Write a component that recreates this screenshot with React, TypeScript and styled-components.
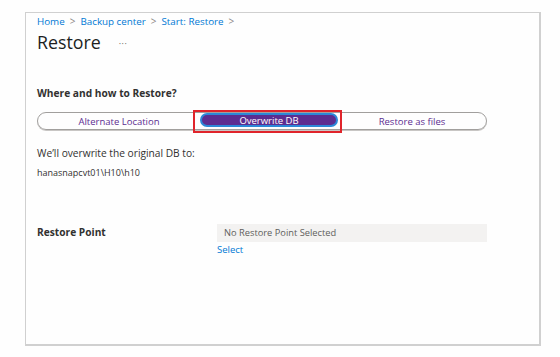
import React from "react";
import styled, { createGlobalStyle } from "styled-components";

const Global = createGlobalStyle`
  html, body { margin: 0; padding: 0; background: #fefefe; }
  body { font-family: "Open Sans", "Noto Sans", sans-serif; color: #323130; }
`;

const Page = styled.div`
  padding: 12px 20px 12px 25px;
`;

const Frame = styled.div`
  box-sizing: border-box;
  width: 516px;
  height: 334px;
  border: 1px solid #d0d0d0;
  border-right: 2px solid #d0d0d0;
  border-bottom: 2px solid #d0d0d0;
  background: #fefefe;
  padding: 0 11px;
  display: flex;
  flex-direction: column;
`;

const Crumbs = styled.div`
  display: flex;
  align-items: center;
  gap: 5px;
  height: 16px;
  font-size: 9.8px;
  color: #0078d4;
`;

const Chevron = styled.span`
  color: #8a8886;
  font-size: 10px;
`;

const TitleRow = styled.div`
  display: flex;
  align-items: center;
  gap: 18px;
  margin-top: 1px;
  height: 24px;
`;

const Title = styled.h1`
  margin: 0;
  font-size: 17.8px;
  font-weight: 400;
  color: #201f1e;
`;

const Dots = styled.span`
  font-size: 9px;
  color: #605e5c;
  letter-spacing: 0.5px;
  transform: translateY(1px);
`;

const Heading = styled.div`
  margin-top: 31px;
  height: 16px;
  line-height: 16px;
  font-size: 10.2px;
  font-weight: 700;
  color: #323130;
`;

const Toggle = styled.div`
  box-sizing: border-box;
  margin-top: 11px;
  width: 450px;
  height: 18px;
  border: 1px solid #a19f9d;
  border-radius: 9px;
  box-shadow: 0 1px 0 #c8c6c4;
  display: grid;
  grid-template-columns: 162px 138px 1fr;
  align-items: start;
`;

const Segment = styled.div<{ $selected?: boolean }>`
  position: relative;
  box-sizing: border-box;
  height: ${(p) => (p.$selected ? "14px" : "16px")};
  display: flex;
  align-items: center;
  justify-content: center;
  font-size: 9.5px;
  border-radius: 8px;
  color: ${(p) => (p.$selected ? "#ffffff" : "#5c2d91")};
  background: ${(p) => (p.$selected ? "#5c2d91" : "transparent")};
  border: ${(p) => (p.$selected ? "2px solid #2b88d8" : "none")};
`;

const Highlight = styled.div`
  position: absolute;
  left: -9px;
  right: -6px;
  top: -5px;
  bottom: -8px;
  border: 2px solid #e0242b;
  pointer-events: none;
`;

const Text = styled.div`
  margin-top: 15px;
  height: 16px;
  line-height: 16px;
  font-size: 10.2px;
  color: #323130;
`;

const Small = styled.div`
  margin-top: 5px;
  height: 14px;
  line-height: 14px;
  font-size: 9px;
  color: #323130;
`;

const Row = styled.div`
  margin-top: 44px;
  display: grid;
  grid-template-columns: 180px 270px;
  align-items: start;
`;

const Label = styled.div`
  font-size: 10.2px;
  font-weight: 700;
  line-height: 16px;
  color: #323130;
`;

const Field = styled.div`
  display: flex;
  flex-direction: column;
`;

const Placeholder = styled.div`
  box-sizing: border-box;
  height: 18px;
  background: #f3f2f1;
  padding-left: 7px;
  font-size: 9.3px;
  line-height: 18px;
  color: #605e5c;
`;

const Link = styled.a`
  margin-top: 1px;
  font-size: 9.5px;
  line-height: 14px;
  color: #0078d4;
  text-decoration: none;
  align-self: flex-start;
`;

export default function App() {
  return (
    <>
      <Global />
      <Page>
        <Frame>
          <Crumbs>
            <span>Home</span>
            <Chevron>&gt;</Chevron>
            <span>Backup center</span>
            <Chevron>&gt;</Chevron>
            <span>Start: Restore</span>
            <Chevron>&gt;</Chevron>
          </Crumbs>
          <TitleRow>
            <Title>Restore</Title>
            <Dots>···</Dots>
          </TitleRow>
          <Heading>Where and how to Restore?</Heading>
          <Toggle>
            <Segment>Alternate Location</Segment>
            <Segment $selected>
              Overwrite DB
              <Highlight />
            </Segment>
            <Segment>Restore as files</Segment>
          </Toggle>
          <Text>We’ll overwrite the original DB to:</Text>
          <Small>hanasnapcvt01\H10\h10</Small>
          <Row>
            <Label>Restore Point</Label>
            <Field>
              <Placeholder>No Restore Point Selected</Placeholder>
              <Link href="#">Select</Link>
            </Field>
          </Row>
        </Frame>
      </Page>
    </>
  );
}
